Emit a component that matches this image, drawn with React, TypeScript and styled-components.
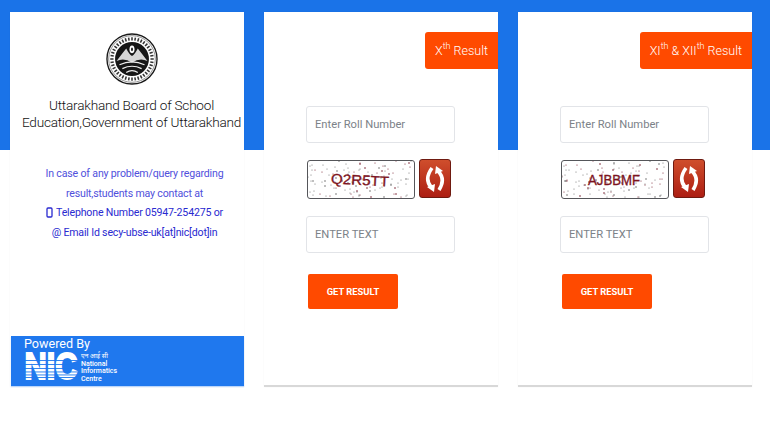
import type { ReactNode } from "react";
import styled, { createGlobalStyle } from "styled-components";

const GlobalStyle = createGlobalStyle`
    html, body {
        margin: 0;
        padding: 0;
        background: #fff;
    }
    * {
        box-sizing: border-box;
    }
`;

const Page = styled.div`
    width: 770px;
    height: 431px;
    padding: 12px 18px 0 10px;
    overflow: hidden;
    display: grid;
    grid-template-columns: repeat(3, 234px);
    column-gap: 20px;
    align-items: start;
    font-family: Roboto, sans-serif;
    background: linear-gradient(#1a73e8 0, #1a73e8 150px, #fff 150px);
`;

const Card = styled.section`
    height: 375px;
    background: #fff;
    display: flex;
    flex-direction: column;
    box-shadow: 0 0 2px rgba(0, 0, 0, 0.04);
`;

const ResultCard = styled(Card)`
    border-bottom: 2px solid #d8d8d8;
`;

const LogoWrap = styled.div`
    display: flex;
    justify-content: center;
    margin-top: 21px;
    padding-left: 10px;
`;

const Title = styled.h1`
    margin: 12px 0 0;
    padding-left: 9px;
    font-size: 13.6px;
    letter-spacing: -0.23px;
    line-height: 17px;
    font-weight: 300;
    text-align: center;
    color: #111;
    white-space: nowrap;
`;

const Contact = styled.div`
    margin-top: 33px;
    padding-left: 15px;
    display: flex;
    flex-direction: column;
    align-items: center;
`;

const ContactLine = styled.div<{ $soft?: boolean }>`
    height: 19.5px;
    line-height: 19.5px;
    font-size: 10.6px;
    letter-spacing: -0.18px;
    color: ${(p) => (p.$soft ? "#5050dc" : "#2a2ad0")};
    display: flex;
    align-items: center;
    gap: 3px;
    white-space: nowrap;
`;

const Footer = styled.footer`
    margin: auto 0 1px 1px;
    height: 50px;
    padding: 1px 0 0 13px;
    background: #1f78ee;
    color: #fff;
    box-shadow: 0 1px 1px rgba(31, 120, 238, 0.3);
`;

const PoweredBy = styled.div`
    font-size: 12.6px;
    line-height: 14px;
`;

const TabRow = styled.div`
    margin-top: 20px;
    display: flex;
    justify-content: flex-end;
`;

const Tab = styled.div`
    height: 37px;
    padding: 0 10px;
    display: flex;
    align-items: center;
    background: #ff4a00;
    color: #fff;
    border-radius: 3px 0 0 3px;
    font-size: 12.5px;
    font-weight: 300;
    white-space: nowrap;

    sup {
        font-size: 9px;
        line-height: 0;
        position: relative;
        top: -1px;
        vertical-align: super;
    }
`;

const Form = styled.div`
    margin-top: 37px;
    padding-left: 42px;
    display: flex;
    flex-direction: column;
    align-items: flex-start;
`;

const Input = styled.input`
    width: 149px;
    height: 37px;
    padding: 0 8px;
    border: 1px solid #e2e4e8;
    border-radius: 3px;
    background: #fff;
    font-family: Roboto, sans-serif;
    font-size: 11.2px;
    outline: none;

    &::placeholder {
        color: #7c8288;
        opacity: 1;
    }
`;

const CaptchaRow = styled.div`
    margin: 16px 0 17px 1px;
    display: flex;
    align-items: flex-start;
    gap: 4px;
`;

const CaptchaBox = styled.div`
    width: 108px;
    height: 39px;
    margin-top: 1px;
    border: 1px solid #55565a;
    border-radius: 3px;
    background: #fff;
    overflow: hidden;

    svg {
        display: block;
    }
`;

const RefreshButton = styled.div`
    width: 32px;
    height: 39px;
    border: 1px solid #6f1a10;
    border-radius: 3px;
    background: linear-gradient(#cf4e2c, #ad1e13);
    display: flex;
    align-items: center;
    justify-content: center;
`;

const SubmitButton = styled.button`
    margin: 21px 0 0 2px;
    width: 90px;
    height: 35px;
    padding: 0;
    border: none;
    border-radius: 2px;
    background: #ff4a00;
    color: #fff;
    font-family: Roboto, sans-serif;
    font-size: 9.4px;
    font-weight: 700;
`;

const sealMarks = Array.from({ length: 40 }, (_, i) => i * 9);

// the original is a scanned emblem, this is only its rough shape
function Seal() {
    return (
        <svg width="52" height="52" viewBox="0 0 54 54">
            <circle cx="27" cy="27" r="26" fill="#fff" stroke="#1a1a1a" strokeWidth="1.4" />
            <circle cx="27" cy="27" r="24.2" fill="none" stroke="#444" strokeWidth="0.6" />
            {sealMarks.map((a) => (
                <rect key={a} x="26.2" y="4.4" width="1.6" height="3.4" fill="#333" transform={`rotate(${a} 27 27)`} />
            ))}
            <circle cx="27" cy="27" r="17.6" fill="#161616" />
            <path d="M11 29 Q17 21 21 16 Q24 22 27 24 Q30 22 33 16 Q37 21 43 29 Q35 25 27 31 Q19 25 11 29 Z" fill="#d6d6d6" />
            <ellipse cx="27" cy="17" rx="2.6" ry="4" fill="#fff" />
            <ellipse cx="27" cy="17" rx="1" ry="2" fill="#222" />
            <path d="M14 33 Q27 27 40 33 M17 37 Q27 32 37 37 M21 41 Q27 37 33 41" stroke="#eee" strokeWidth="1.2" fill="none" />
        </svg>
    );
}

const nicStripes = [9, 13, 17, 20.5, 23.5, 26];

function NicLogo() {
    return (
        <svg width="96" height="31" viewBox="0 0 96 31" overflow="visible">
            <text
                x="0.5"
                y="28"
                fontFamily="Liberation Sans, sans-serif"
                fontWeight="700"
                fontSize="37"
                textLength="53"
                lengthAdjust="spacingAndGlyphs"
                fill="#fff"
                stroke="#fff"
                strokeWidth="1.8"
            >
                NIC
            </text>
            {nicStripes.map((y) => (
                <rect key={y} x="0" y={y} width="55" height="0.9" fill="#1f78ee" />
            ))}
            <text x="57" y="7" fontFamily="Noto Sans, sans-serif" fontSize="6.6" fill="#fff">
                एन आई सी
            </text>
            <g fontFamily="Roboto, sans-serif" fontSize="7" fontWeight="500" fill="#fff">
                <text x="57" y="14.5">National</text>
                <text x="57" y="22">Informatics</text>
                <text x="57" y="29.5">Centre</text>
            </g>
        </svg>
    );
}

const noise = (seed: number) => {
    const dots: { x: number; y: number; r: number }[] = [];
    let v = seed;
    for (let i = 0; i < 110; i++) {
        v = (v * 137 + 59) % 1009;
        const x = v % 106;
        v = (v * 137 + 59) % 1009;
        const y = v % 37;
        dots.push({ x, y, r: i % 4 === 0 ? 0.8 : 0.55 });
    }
    return dots;
};

function Captcha({ code, seed, width, skew }: { code: string; seed: number; width: number; skew?: boolean }) {
    return (
        <CaptchaBox>
            <svg width="106" height="37" viewBox="0 0 106 37">
                {noise(seed).map((d, i) => (
                    <circle key={i} cx={d.x} cy={d.y} r={d.r} fill={i % 3 === 0 ? "#7a2030" : "#6f6f6f"} />
                ))}
                <text
                    x="52"
                    y="24"
                    textAnchor="middle"
                    fontFamily="Liberation Sans, sans-serif"
                    fontSize="14"
                    textLength={width}
                    lengthAdjust="spacingAndGlyphs"
                    fill="#7d141e"
                    stroke="#7d141e"
                    strokeWidth="0.35"
                    transform={skew ? "rotate(3 53 20)" : undefined}
                >
                    {code}
                </text>
            </svg>
        </CaptchaBox>
    );
}

function RefreshIcon() {
    return (
        <svg width="24" height="32" viewBox="0 0 24 32">
            <path d="M9 5 Q1 16 8 24" fill="none" stroke="#fff" strokeWidth="3.6" />
            <path d="M15 8 Q23 16 16 27" fill="none" stroke="#fff" strokeWidth="3.6" />
            <path d="M4 24 L12 21 L11 29 Z" fill="#fff" />
            <path d="M20 8 L12 11 L13 3 Z" fill="#fff" />
        </svg>
    );
}

function PhoneIcon() {
    return (
        <svg width="7" height="11" viewBox="0 0 7 11">
            <rect x="1" y="1" width="5" height="9" rx="1" fill="none" stroke="#2a2ad0" strokeWidth="1.3" />
        </svg>
    );
}

function ResultPanel({ tab, code, seed, width, skew }: { tab: ReactNode; code: string; seed: number; width: number; skew?: boolean }) {
    return (
        <ResultCard>
            <TabRow>
                <Tab>{tab}</Tab>
            </TabRow>
            <Form>
                <Input placeholder="Enter Roll Number" />
                <CaptchaRow>
                    <Captcha code={code} seed={seed} width={width} skew={skew} />
                    <RefreshButton>
                        <RefreshIcon />
                    </RefreshButton>
                </CaptchaRow>
                <Input placeholder="ENTER TEXT" />
                <SubmitButton>GET RESULT</SubmitButton>
            </Form>
        </ResultCard>
    );
}

function App() {
    return (
        <>
            <GlobalStyle />
            <Page>
                <Card>
                    <LogoWrap>
                        <Seal />
                    </LogoWrap>
                    <Title>
                        Uttarakhand Board of School
                        <br />
                        Education,Government of Uttarakhand
                    </Title>
                    <Contact>
                        <ContactLine $soft>In case of any problem/query regarding</ContactLine>
                        <ContactLine $soft>result,students may contact at</ContactLine>
                        <ContactLine>
                            <PhoneIcon />
                            Telephone Number 05947-254275 or
                        </ContactLine>
                        <ContactLine>@ Email Id secy-ubse-uk[at]nic[dot]in</ContactLine>
                    </Contact>
                    <Footer>
                        <PoweredBy>Powered By</PoweredBy>
                        <NicLogo />
                    </Footer>
                </Card>
                <ResultPanel
                    tab={<span>X<sup>th</sup> Result</span>}
                    code="Q2R5TT"
                    seed={17}
                    width={58}
                    skew
                />
                <ResultPanel
                    tab={<span>XI<sup>th</sup> &amp; XII<sup>th</sup> Result</span>}
                    code="AJBBMF"
                    seed={211}
                    width={52}
                />
            </Page>
        </>
    );
}

export default App;
